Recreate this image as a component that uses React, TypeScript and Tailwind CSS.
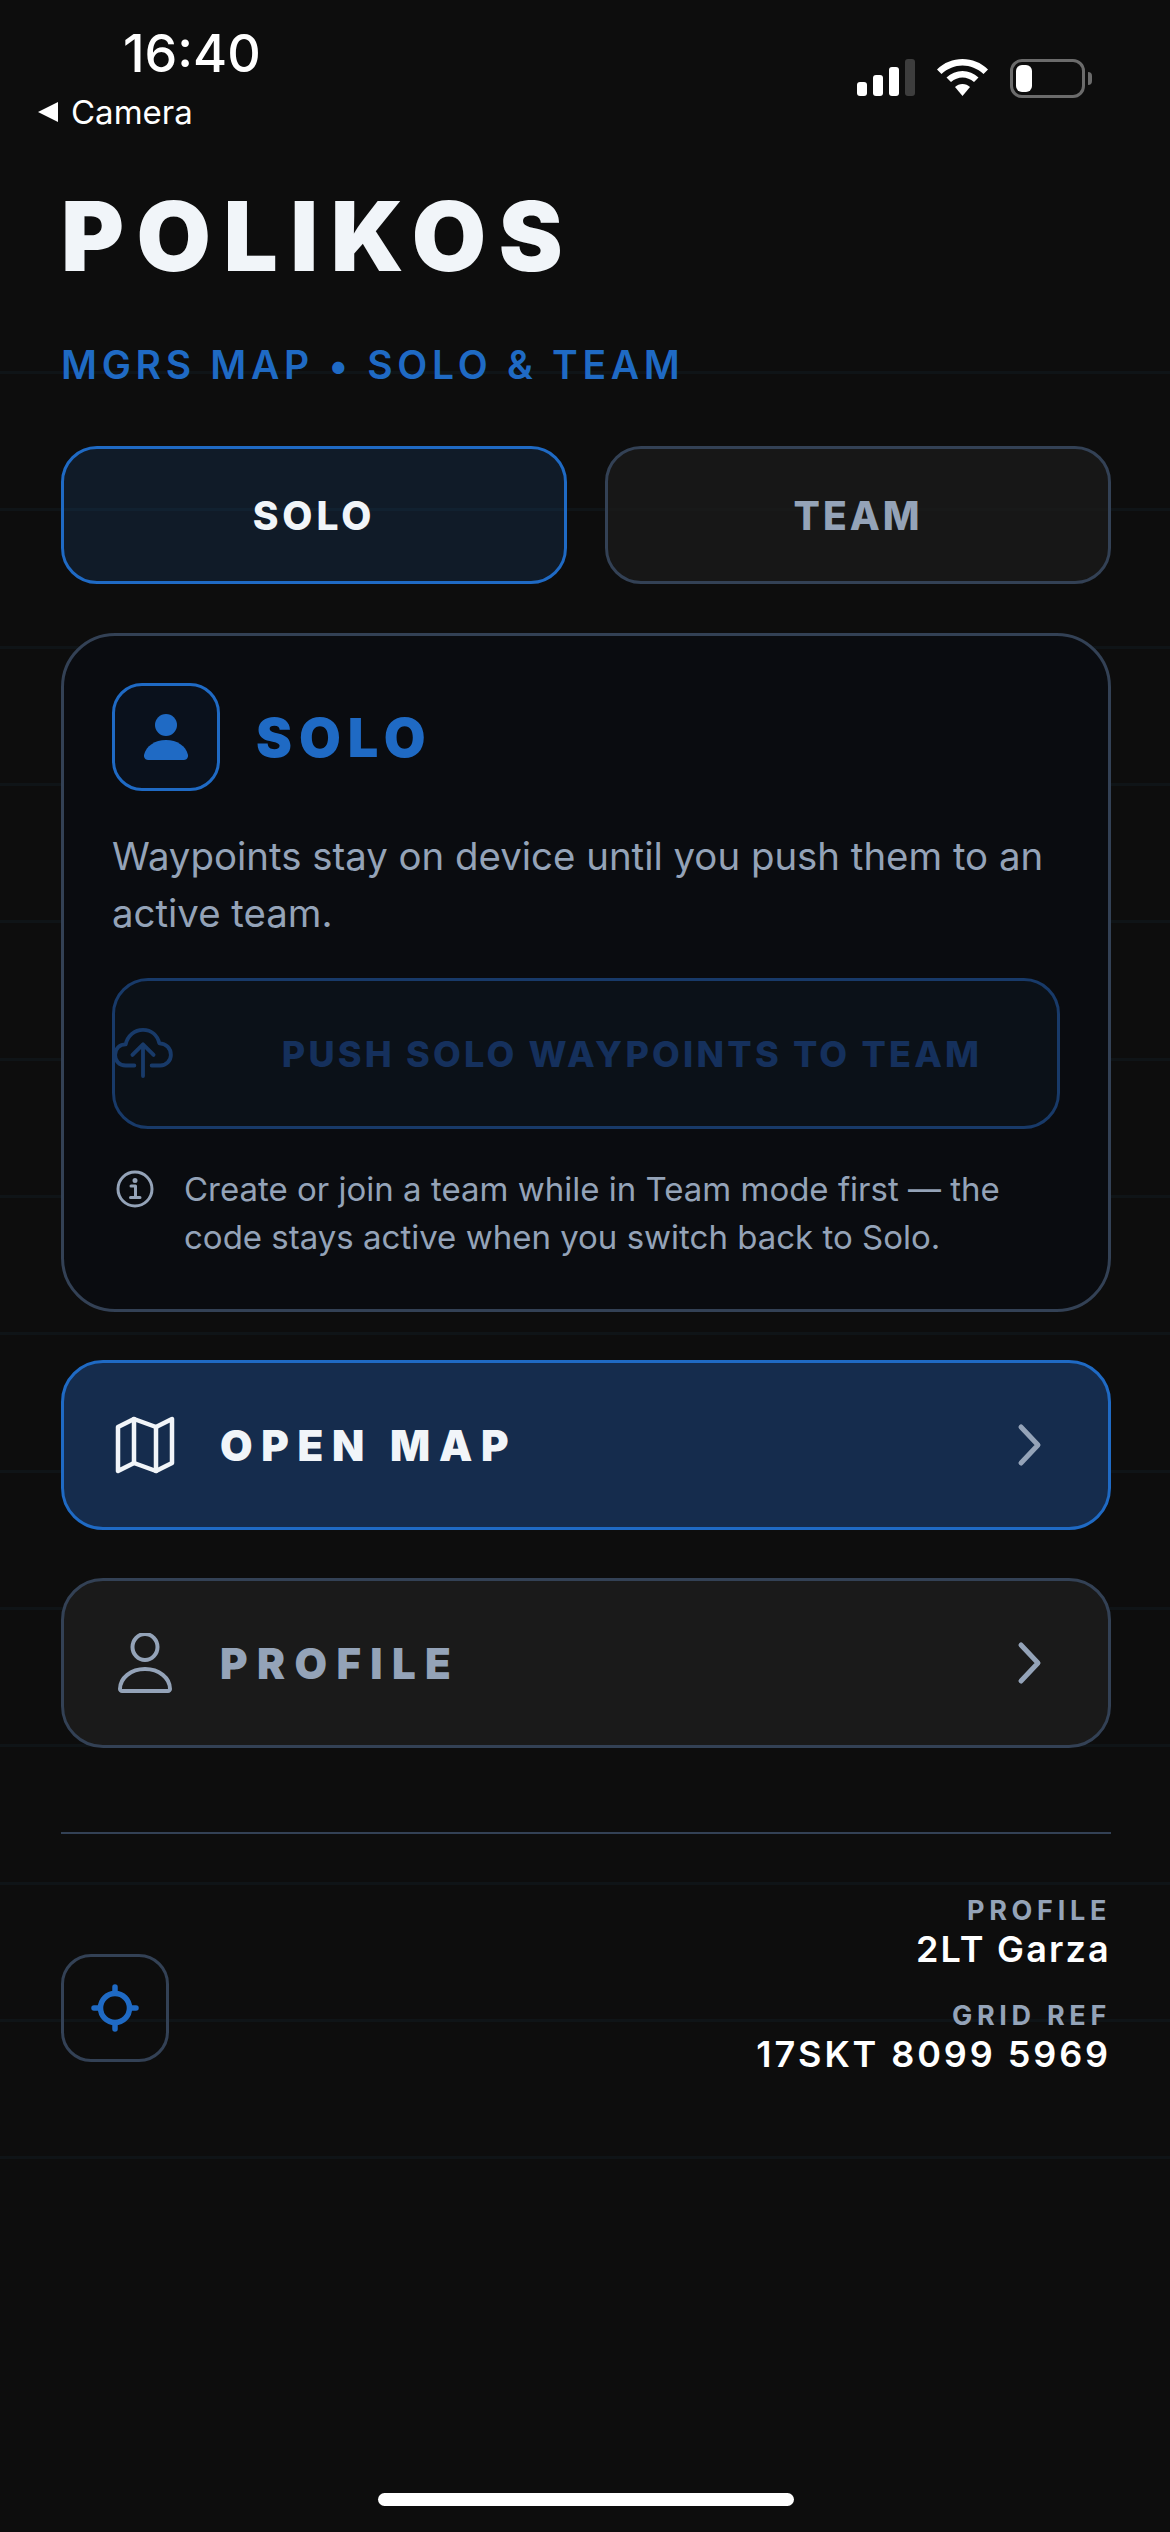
function StatusIcons() {
  return (
    <div className="flex items-start gap-[22px] pt-[27px]">
      <svg width="58" height="37" viewBox="0 0 58 37">
        <rect x="0" y="23" width="10" height="14" rx="3" fill="#fff" />
        <rect x="16" y="16" width="10" height="21" rx="3" fill="#fff" />
        <rect x="32" y="8" width="10" height="29" rx="3" fill="#fff" />
        <rect x="48" y="0" width="10" height="37" rx="3" fill="#3d3d3d" />
      </svg>
      <svg width="51" height="37" viewBox="0 0 51 37">
        <path d="M25.500 0C35 0 44 3.500 51 10.500L46.500 15C40.500 9.500 33 6.500 25.500 6.500C18 6.500 10.500 9.500 4.500 15L0 10.500C7 3.500 16 0 25.500 0Z" fill="#fff" />
        <path d="M25.500 12C31.500 12 37 14.200 41.500 18.500L37 23C33.500 20 29.500 18.500 25.500 18.500C21.500 18.500 17.500 20 14 23L9.500 18.500C14 14.200 19.500 12 25.500 12Z" fill="#fff" />
        <path d="M25.500 25C28.500 25 30.800 26 33 28L25.500 37L18 28C20.200 26 22.500 25 25.500 25Z" fill="#fff" />
      </svg>
      <div className="flex items-center gap-[3px]">
        <div className="flex h-[39px] w-[75px] items-center rounded-[12px] border-[3px] border-[#6b6b6b] px-[3px]">
          <div className="h-[27px] w-[16px] rounded-[6px] bg-white" />
        </div>
        <div className="h-[13px] w-[4px] rounded-r-full bg-[#6b6b6b]" />
      </div>
    </div>
  );
}

function PersonFilled() {
  return (
    <svg width="46" height="46" viewBox="0 0 46 46" fill="#1f6ac4">
      <circle cx="23" cy="11" r="11" />
      <path d="M1 41C3 32 12 26 23 26C34 26 43 32 45 41C45.300 43 44 46 41 46H5C2 46 .700 43 1 41Z" />
    </svg>
  );
}

function PersonOutline() {
  return (
    <svg width="56" height="60" viewBox="0 0 56 60" fill="none" stroke="#94a3b8" strokeWidth="4" strokeLinejoin="round" className="translate-x-[3px]">
      <ellipse cx="28" cy="14" rx="12.500" ry="13" />
      <path d="M3 56C3 45 14 36 28 36C42 36 53 45 53 56C53 57 52 58 51 58H5C4 58 3 57 3 56Z" />
    </svg>
  );
}

function MapIcon() {
  return (
    <svg width="60" height="60" viewBox="0 0 60 60" fill="none" stroke="#f1f5f9" strokeWidth="4.500" strokeLinejoin="round" strokeLinecap="round" className="translate-x-[3px]">
      <path d="M3 12L19 4L41 12L57 4V48L41 56L19 48L3 56Z" />
      <path d="M19 4V48M41 12V56" />
    </svg>
  );
}

function Chevron() {
  return (
    <svg width="26" height="44" viewBox="0 0 26 44" fill="none" stroke="#94a3b8" strokeWidth="5" strokeLinecap="round" strokeLinejoin="round">
      <path d="M4 4L21 22L4 40" />
    </svg>
  );
}

function CloudUpload() {
  return (
    <svg width="60" height="50" viewBox="0 0 62 52" fill="none" stroke="#183a69" strokeWidth="4" strokeLinecap="round" strokeLinejoin="round">
      <path d="M22 39H13C6 39 2 34 2 28C2 21 7 17 13 17C15 8 22 2 31 2C40 2 46 8 48 16C55 16 60 21 60 28C60 34 55 39 49 39H40" />
      <path d="M31 50V18M20 28L31 17L42 28" />
    </svg>
  );
}

function InfoIcon() {
  return (
    <svg width="38" height="38" viewBox="0 0 38 38" fill="none" stroke="#94a3b8" strokeWidth="3" strokeLinecap="round" strokeLinejoin="round" className="mt-[5px] shrink-0">
      <circle cx="19" cy="19" r="17" />
      <path d="M15 16H19.500V27M14.500 27.500H24" />
      <circle cx="19" cy="10.500" r="1" fill="#94a3b8" />
    </svg>
  );
}

function LocateIcon() {
  return (
    <svg width="48" height="48" viewBox="0 0 48 48" fill="none" stroke="#1f6ac4" strokeWidth="5.500" strokeLinecap="round">
      <circle cx="24" cy="24" r="14.500" />
      <path d="M24 3V8M24 40V45M3 24H8M40 24H45" />
    </svg>
  );
}

function NavRow({ label, active, icon }: { label: string; active?: boolean; icon: React.ReactNode }) {
  return (
    <div
      className={`flex h-[170px] items-center rounded-[42px] border-[3px] pl-[48px] pr-[65px] ${
        active ? "border-[#1f6ac4] bg-[#152c4d]" : "border-[#334155] bg-[#1a1a1a]"
      }`}
    >
      <div className="flex w-[60px] items-center justify-center">{icon}</div>
      <span
        className={`ml-[48px] flex-1 text-[42px] font-black ${
          active ? "tracking-[8.700px] text-[#f1f5f9]" : "tracking-[9.400px] text-[#94a3b8]"
        }`}
      >
        {label}
      </span>
      <Chevron />
    </div>
  );
}

export default function App() {
  return (
    <div className="flex h-[2532px] w-[1170px] flex-col overflow-hidden bg-[#0d0d0d] bg-[repeating-linear-gradient(180deg,#0f1417_0px,#0f1417_3px,transparent_3px,transparent_137.33px)] bg-[length:100%_1788px] bg-[position:0_371px] bg-no-repeat font-['Inter',sans-serif]">
      <div className="flex items-start justify-between pt-[32px] pl-[38px] pr-[78px]">
        <div>
          <div className="pl-[85px] text-[52px] leading-[44px] font-medium text-white">16:40</div>
          <div className="mt-[18px] flex items-center gap-[13px] text-[33px] leading-[36px] text-white">
            <div className="h-0 w-0 border-y-[10px] border-r-[20px] border-y-transparent border-r-white" />
            <span>Camera</span>
          </div>
        </div>
        <StatusIcons />
      </div>

      <div className="flex flex-1 flex-col pt-[48px] pr-[59px] pl-[61px]">
        <h1 className="text-[96px] leading-[116px] font-black tracking-[12.500px] text-[#f1f5f9]">POLIKOS</h1>
        <p className="mt-[47px] text-[39px] leading-[47px] font-semibold tracking-[4.700px] text-[#1f6ac4]">
          MGRS MAP • SOLO &amp; TEAM
        </p>

        <div className="mt-[58px] grid grid-cols-2 gap-[38px]">
          <div className="flex h-[138px] items-center justify-center rounded-[36px] border-[3px] border-[#1f6ac4] bg-[#1f6ac4]/15 pt-[3px] text-[39px] font-extrabold tracking-[3.900px] text-[#f1f5f9]">
            SOLO
          </div>
          <div className="flex h-[138px] items-center justify-center rounded-[36px] border-[3px] border-[#334155] bg-[#1a1a1a]/85 pt-[3px] text-[39px] font-extrabold tracking-[3px] text-[#94a3b8]">
            TEAM
          </div>
        </div>

        <div className="mt-[49px] rounded-[54px] border-[3px] border-[#334155] bg-[#0a0c10] px-[48px] pt-[47px] pb-[48px]">
          <div className="flex items-center gap-[36px]">
            <div className="flex h-[108px] w-[108px] items-center justify-center rounded-[30px] border-[3px] border-[#1f6ac4] bg-[#0a111c]">
              <PersonFilled />
            </div>
            <h2 className="text-[54px] font-black tracking-[7px] text-[#1f6ac4]">SOLO</h2>
          </div>
          <p className="mt-[37px] text-[38.400px] leading-[57px] text-[#94a3b8]">
            Waypoints stay on device until you push them to an active team.
          </p>
          <div className="relative mt-[36px] flex h-[151px] items-center justify-center rounded-[36px] border-[3px] border-[#183a69] bg-[#0b1118] pl-[92px]">
            <div className="absolute top-[47px] -left-[2px]">
              <CloudUpload />
            </div>
            <span className="text-[36px] font-extrabold tracking-[3.200px] text-[#15305c]">PUSH SOLO WAYPOINTS TO TEAM</span>
          </div>
          <div className="mt-[36px] flex gap-[30px] pl-[4px]">
            <InfoIcon />
            <p className="text-[33px] leading-[48px] text-[#94a3b8]">
              Create or join a team while in Team mode first — the code stays active when you switch back to Solo.
            </p>
          </div>
        </div>

        <div className="mt-[48px] flex flex-col gap-[48px]">
          <NavRow label="OPEN MAP" active icon={<MapIcon />} />
          <NavRow label="PROFILE" icon={<PersonOutline />} />
        </div>

        <div className="mt-[84px] h-[2px] bg-[#334155]" />

        <div className="mt-[60px] flex items-end justify-between">
          <div className="mb-[14px] flex h-[108px] w-[108px] items-center justify-center rounded-[30px] border-[3px] border-[#334155]">
            <LocateIcon />
          </div>
          <div className="text-right">
            <div className="text-[27px] leading-[33px] font-bold tracking-[4.700px] text-[#94a3b8]">PROFILE</div>
            <div className="text-[36px] leading-[44px] font-semibold tracking-[2.200px] text-white">2LT Garza</div>
            <div className="mt-[28px] text-[27px] leading-[33px] font-bold tracking-[4.700px] text-[#94a3b8]">GRID REF</div>
            <div className="text-[36px] leading-[44px] font-semibold tracking-[2.900px] text-white">17SKT 8099 5969</div>
          </div>
        </div>

        <div className="mt-auto mb-[26px] h-[13px] w-[416px] self-center rounded-full bg-white" />
      </div>
    </div>
  );
}
